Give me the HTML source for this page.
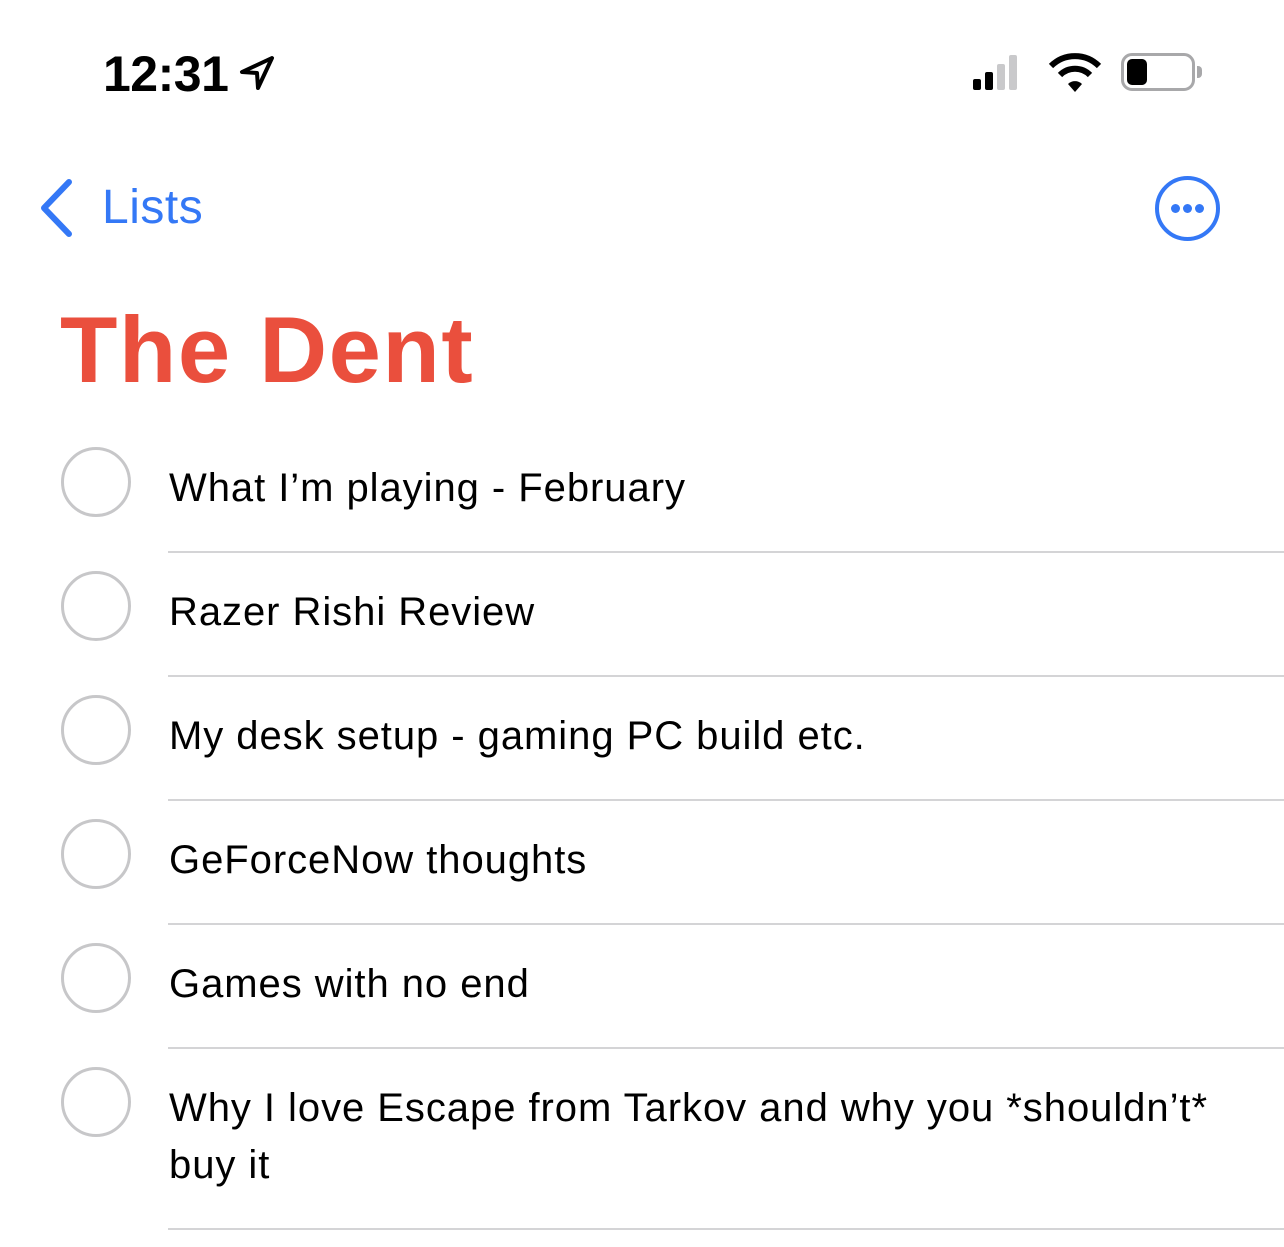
<!DOCTYPE html>
<html><head><meta charset="utf-8"><style>
*{margin:0;padding:0;box-sizing:border-box}
body{width:1284px;height:1247px;background:#fff;position:relative;overflow:hidden;font-family:"Liberation Sans",sans-serif;color:#000}
.a{position:absolute;white-space:nowrap}
.c{position:absolute;left:61px;width:70px;height:70px;border:3.5px solid #c7c7c9;border-radius:50%}
.t{position:absolute;left:169px;font-size:40px;line-height:57px;letter-spacing:0.95px}
.s{position:absolute;left:168px;right:0;height:1.5px;background:#d4d4d6}
</style></head><body>
<div class="a" style="left:103px;top:44px;font-size:50px;font-weight:bold;letter-spacing:-0.5px;line-height:60px">12:31</div>
<svg class="a" style="left:238px;top:54px" width="38" height="38" viewBox="0 0 38 38"><path d="M34 4 L4 18 L19 19 L20 34 Z" fill="none" stroke="#000" stroke-width="4" stroke-linejoin="round"/></svg>
<svg class="a" style="left:970px;top:52px" width="64" height="40"><rect x="3" y="27" width="8" height="11" rx="2" fill="#000"/><rect x="15" y="20" width="8" height="18" rx="2" fill="#000"/><rect x="27" y="12" width="8" height="26" rx="2" fill="#c9c9cb"/><rect x="39" y="3" width="8" height="35" rx="2" fill="#c9c9cb"/></svg>
<svg class="a" style="left:1048px;top:52px" width="54" height="42" viewBox="0 0 54 42"><path d="M3 14 A34 34 0 0 1 51 14" fill="none" stroke="#000" stroke-width="6"/><path d="M12 23 A21 21 0 0 1 42 23" fill="none" stroke="#000" stroke-width="6"/><path d="M20 32 L27 40 L34 32 A10 10 0 0 0 20 32 Z" fill="#000"/></svg>
<div class="a" style="left:1121px;top:53px;width:74px;height:38px;border:3px solid #a8a8aa;border-radius:11px"></div>
<div class="a" style="left:1127px;top:59px;width:20px;height:26px;background:#000;border-radius:5px"></div>
<div class="a" style="left:1197px;top:66px;width:5px;height:12px;background:#a8a8aa;border-radius:0 4px 4px 0"></div>
<svg class="a" style="left:36px;top:178px" width="40" height="60"><path d="M33 4 L8 30 L33 56" fill="none" stroke="#3478f6" stroke-width="6" stroke-linecap="round" stroke-linejoin="round"/></svg>
<div class="a" style="left:102px;top:180px;font-size:48px;color:#3478f6;line-height:56px;letter-spacing:0.5px">Lists</div>
<div class="a" style="left:1155px;top:176px;width:65px;height:65px;border:4px solid #3478f6;border-radius:50%"></div>
<div class="a" style="left:1171px;top:204px;width:9px;height:9px;background:#3478f6;border-radius:50%"></div>
<div class="a" style="left:1183px;top:204px;width:9px;height:9px;background:#3478f6;border-radius:50%"></div>
<div class="a" style="left:1195px;top:204px;width:9px;height:9px;background:#3478f6;border-radius:50%"></div>
<div class="a" style="left:60px;top:295px;font-size:94px;font-weight:bold;color:#ea4f3d;line-height:110px;letter-spacing:1.5px">The Dent</div>

<div class="c" style="top:447px"></div><div class="t" style="top:460px">What I’m playing - February</div><div class="s" style="top:551px"></div>
<div class="c" style="top:571px"></div><div class="t" style="top:584px">Razer Rishi Review</div><div class="s" style="top:675px"></div>
<div class="c" style="top:695px"></div><div class="t" style="top:708px">My desk setup - gaming PC build etc.</div><div class="s" style="top:799px"></div>
<div class="c" style="top:819px"></div><div class="t" style="top:832px">GeForceNow thoughts</div><div class="s" style="top:923px"></div>
<div class="c" style="top:943px"></div><div class="t" style="top:956px">Games with no end</div><div class="s" style="top:1047px"></div>
<div class="c" style="top:1067px"></div><div class="t" style="top:1080px">Why I love Escape from Tarkov and why you *shouldn’t*</div><div class="t" style="top:1137px">buy it</div><div class="s" style="top:1228px"></div>
</body></html>
